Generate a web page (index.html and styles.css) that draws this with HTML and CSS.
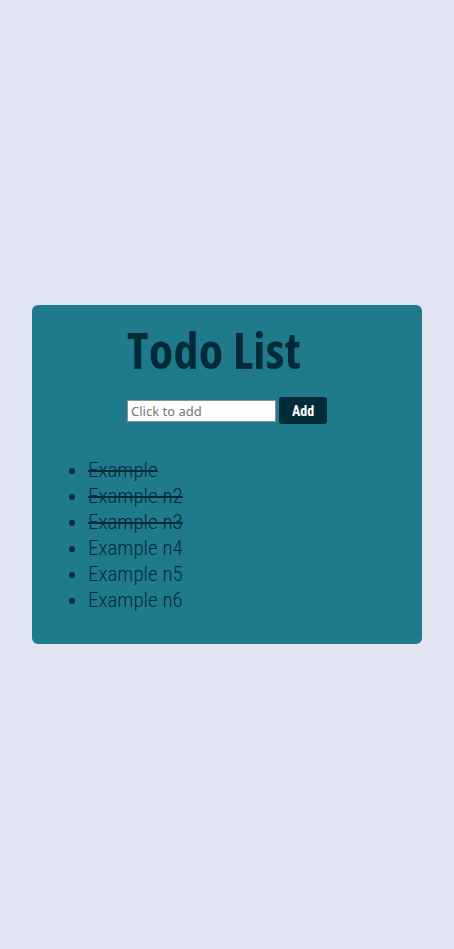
FILE: index.html
```html
<!DOCTYPE html>
<html>
<head>
<meta charset="utf-8">
<title>Todo List</title>
<link rel="stylesheet" href="styles.css">
</head>
<body>
<main class="card">
  <div class="head">
    <h1 class="title">Todo List</h1>
    <form class="add-row">
      <input class="add-input" type="text" placeholder="Click to add">
      <button class="add-btn" type="button">Add</button>
    </form>
  </div>
  <ul class="todos">
    <li class="done">Example</li>
    <li class="done">Example n2</li>
    <li class="done">Example n3</li>
    <li>Example n4</li>
    <li>Example n5</li>
    <li>Example n6</li>
  </ul>
</main>
</body>
</html>
```
FILE: styles.css
```css
html, body {
  margin: 0;
  padding: 0;
}
body {
  background: #e1e5f2;
  color: #022b3a;
  min-height: 100vh;
  display: flex;
  align-items: center;
  justify-content: center;
  font-family: Roboto, "Noto Sans", sans-serif;
}
.card {
  width: 390px;
  box-sizing: border-box;
  background: #1f7a8c;
  border-radius: 6px;
  padding: 20px 16px 31px;
}
.head {
  width: 200px;
  margin: 0 auto;
}
.title {
  margin: 0;
  font-family: "Open Sans", sans-serif;
  font-stretch: condensed;
  font-weight: 700;
  font-size: 50px;
  line-height: 50px;
  letter-spacing: 0.3px;
  color: #022b3a;
}
.add-row {
  margin: 22px 0 0;
  display: flex;
  align-items: center;
  gap: 3px;
}
.add-input {
  width: 149px;
  height: 22px;
  box-sizing: border-box;
  margin: 1px 0 0;
  padding: 0 3px;
  border: 1px solid #8f8f8f;
  background: #fff;
  font-family: "Noto Sans", sans-serif;
  font-size: 13px;
  color: #222;
}
.add-input::placeholder {
  color: #757575;
}
.add-btn {
  width: 48px;
  height: 27px;
  border: 0;
  border-radius: 3px;
  background: #022b3a;
  color: #fff;
  font-family: Roboto, sans-serif;
  font-stretch: condensed;
  font-weight: 700;
  font-size: 14px;
  padding: 0;
}
.todos {
  margin: 33px 0 0;
  padding-left: 40px;
  font-family: Roboto, sans-serif;
  font-stretch: condensed;
  font-weight: 300;
  font-size: 21px;
  line-height: 26px;
}
.done {
  text-decoration: line-through;
}
```
